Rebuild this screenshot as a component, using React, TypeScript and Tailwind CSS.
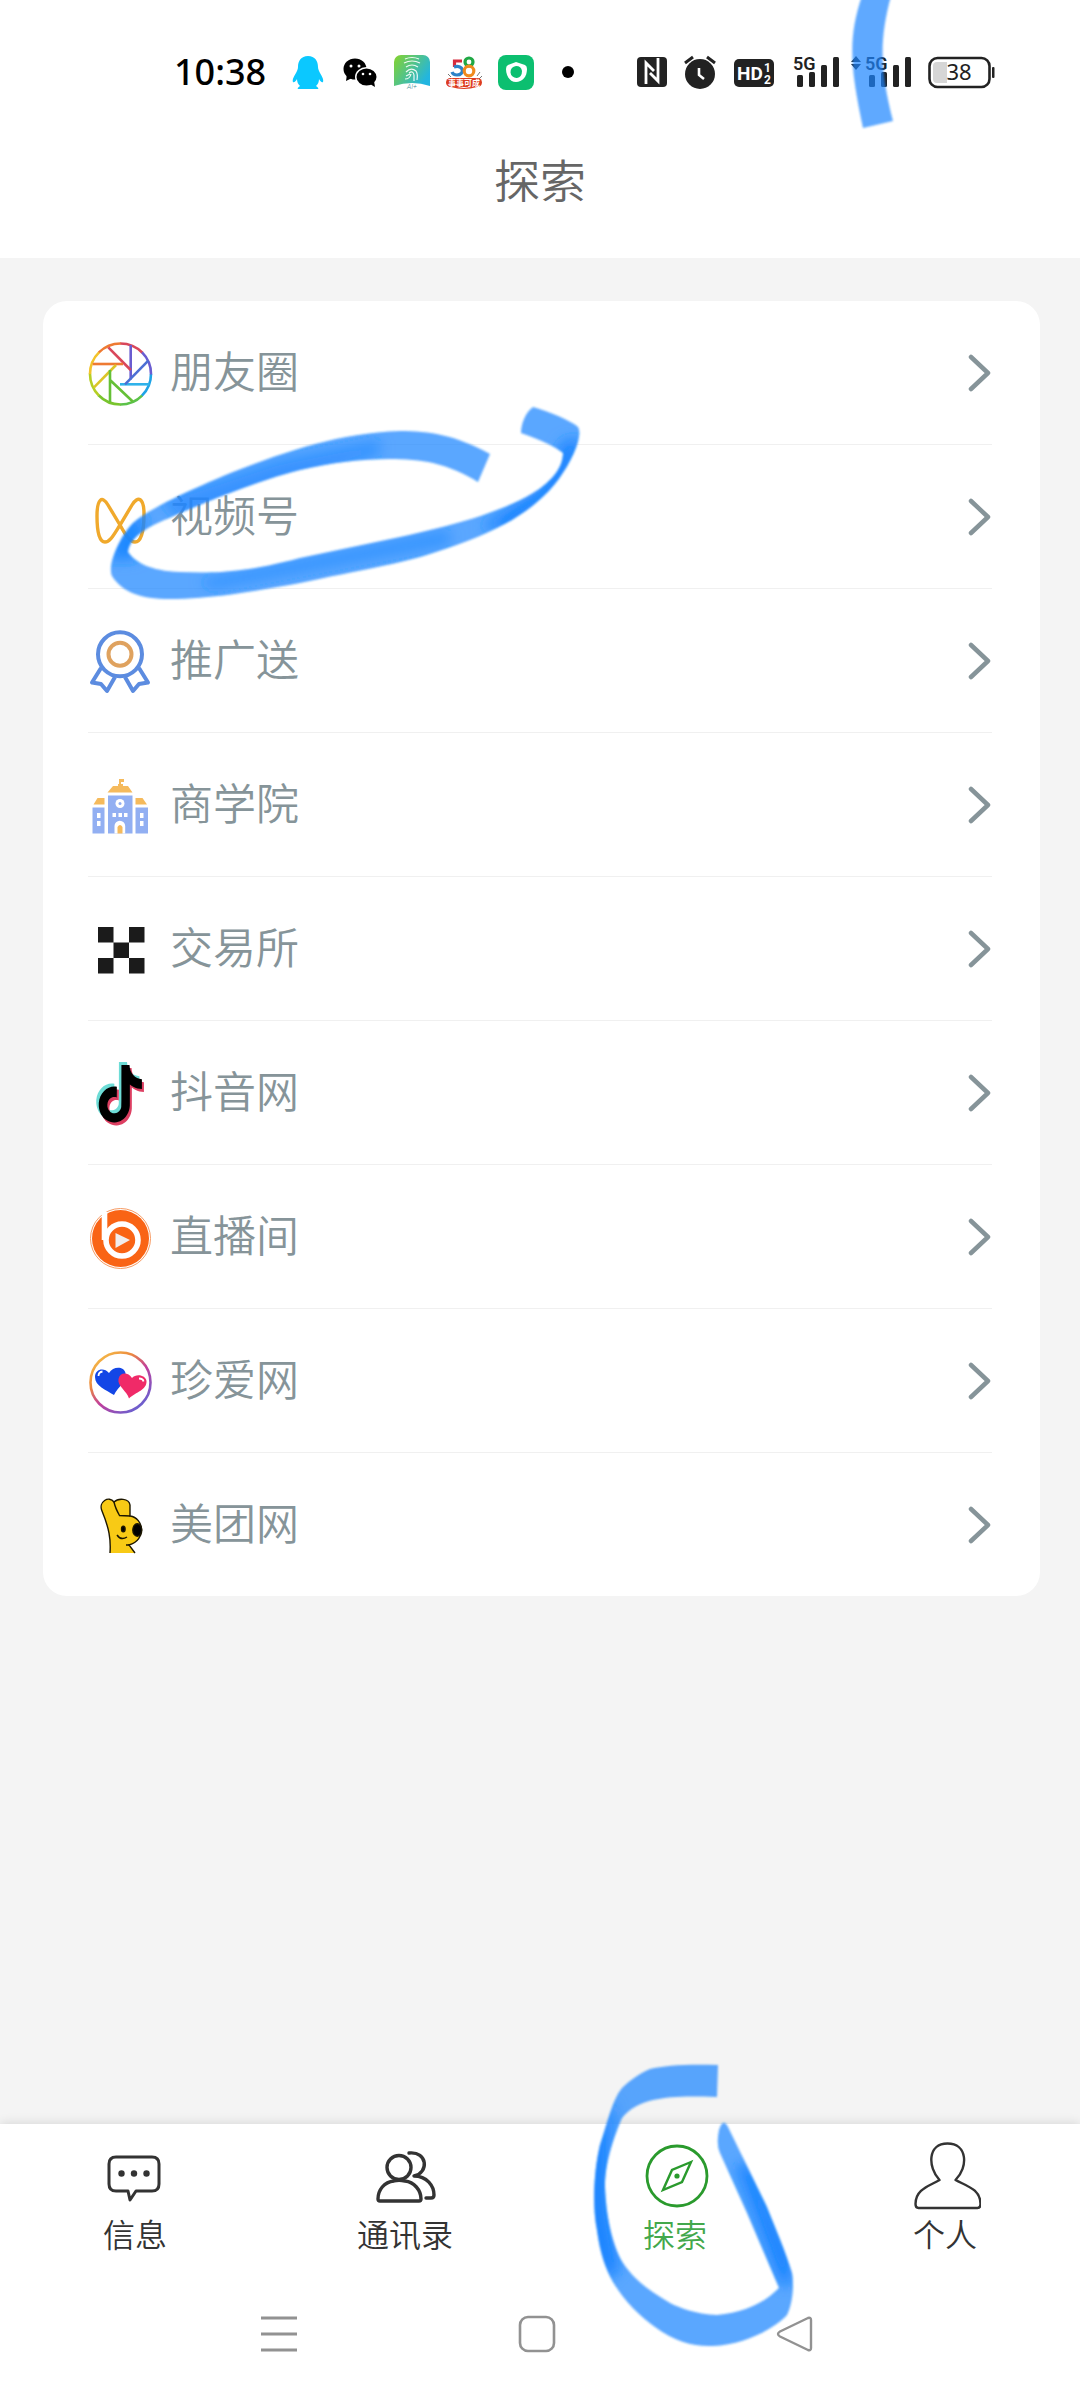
import { useState, type ReactNode } from 'react';

const BarIcon = ({ children, className = 'w-9' }: { children: ReactNode; className?: string }) => (
  <span className={`block h-9 shrink-0 ${className}`}>{children}</span>
);

const SignalBars = ({ x }: { x: number }) => (
  <g fill="#222">
    <text x={x + 1} y="16" fontSize="18" fontWeight="600" fontFamily="Roboto, sans-serif">
      5G
    </text>
    <rect x={x + 5} y="21" width="6" height="12" rx="1.5" />
    <rect x={x + 17} y="18" width="6" height="15" rx="1.5" />
    <rect x={x + 29} y="11" width="6" height="22" rx="1.5" />
    <rect x={x + 41} y="3" width="6" height="30" rx="1.5" />
  </g>
);

const StatusBar = () => (
  <div className="flex h-36 items-center justify-between pl-[174px] pr-[84px]">
    <div className="flex items-center gap-4">
      <time className="mr-2 font-['Noto_Sans',sans-serif] text-[36px] leading-9 font-medium text-black">10:38</time>
      <BarIcon>
        {/* QQ */}
        <svg viewBox="0 0 36 36" fill="#0bc8ff">
          <path d="M18 2C11 2 8 7 8 13c0 2-1 4-2 6-2 3-4 7-3 9 1 1 3-1 4-3 0 3 1 5 3 7-2 1-3 3-2 3h20c1 0 0-2-2-3 2-2 3-4 3-7 1 2 3 4 4 3 1-2-1-6-3-9-1-2-2-4-2-6 0-6-3-11-10-11z" />
        </svg>
      </BarIcon>
      <BarIcon>
        {/* WeChat */}
        <svg viewBox="0 0 36 36">
          <path d="M5 20l-1 7 6-3z" />
          <ellipse cx="13" cy="15" rx="11.5" ry="10.5" />
          <ellipse cx="24.5" cy="23" rx="11.5" ry="10" fill="#fff" />
          <ellipse cx="24.5" cy="23" rx="10" ry="8.6" />
          <path d="M28 30l5 3-1-6z" />
          <g fill="#fff">
            <circle cx="9" cy="12" r="1.5" />
            <circle cx="17" cy="12" r="1.5" />
            <circle cx="21" cy="20" r="1.3" />
            <circle cx="28" cy="20" r="1.3" />
          </g>
        </svg>
      </BarIcon>
      <BarIcon>
        <svg viewBox="0 0 36 36" fill="none">
          <defs>
            <linearGradient id="finger" x1="0" y1="0" x2="1" y2="0.6">
              <stop offset="0" stopColor="#86d32c" />
              <stop offset="1" stopColor="#22b5e0" />
            </linearGradient>
          </defs>
          <path d="M0 32V8a7 7 0 0 1 7-7h22a7 7 0 0 1 7 7v24Q18 26 0 32z" fill="url(#finger)" />
          <g stroke="#fff" strokeWidth="1.2" opacity=".9">
            <path d="M11 5q7-3 14 0M10 9q8-4 16 0M12 13q6-4 12 0M12 18q5-5 10-1 2 3 1 9M15 19q4-3 5 2v6M12 22l4-2M11 25q5 0 6-5" />
          </g>
          <text x="18" y="35" fontSize="7" textAnchor="middle" fill="#3f8c96" fontStyle="italic" fontFamily="Roboto, sans-serif">
            AI+
          </text>
        </svg>
      </BarIcon>
      <BarIcon>
        <svg viewBox="0 0 36 36">
          <path d="M2 20l3 3M34 18l-3 4M36 22l-3 3" stroke="#777" />
          <g fill="none" strokeWidth="3.2">
            <path d="M16 7H8.5v6" stroke="#d62b3c" />
            <path d="M8 13c10-3 11 8 3 8q-4 0-5-3" stroke="#2c83c8" />
            <circle cx="23" cy="8" r="4" stroke="#20a845" />
            <circle cx="23" cy="17" r="4.8" stroke="#f08a1d" />
          </g>
          <rect x="0" y="24" width="36" height="9" rx="4.5" fill="#dd3c20" />
          <path d="M5 31q13 6 26 0v2q-13 4-26 0z" fill="#dd3c20" />
          <text x="18" y="32" fontSize="8" fontWeight="700" textAnchor="middle" fill="#fff" fontFamily="Noto Sans CJK SC, sans-serif">
            事事可成
          </text>
        </svg>
      </BarIcon>
      <BarIcon>
        <svg viewBox="0 0 36 36">
          <rect y="1" width="36" height="35" rx="8" fill="#0cbf70" />
          <path d="M18 8l9 3q2 1 2 4c0 8-5 13-11 13S8 22 8 15q0-3 2-4z" fill="#fff" />
          <path d="M18 12a6 6 0 1 0 1 12q5-1 5-7a6 6 0 0 0-6-5z" fill="#0cbf70" />
        </svg>
      </BarIcon>
      <BarIcon>
        <svg viewBox="0 0 36 36">
          <circle cx="18" cy="18" r="6" />
        </svg>
      </BarIcon>
    </div>

    <div className="flex items-center gap-4">
      <BarIcon className="w-8">
        <svg viewBox="0 0 32 36" className="h-9 w-8">
          <rect x="1" y="3" width="30" height="30" rx="4" fill="#222" />
          <path d="M10 30V9l8 8M22 4v23l-8-8" fill="none" stroke="#fff" strokeWidth="2.8" />
        </svg>
      </BarIcon>
      <BarIcon className="w-8">
        <svg viewBox="0 0 32 36" className="h-9 w-8" fill="none">
          <circle cx="16" cy="20" r="15" fill="#222" />
          <path d="M1 9l8-6M31 9l-8-6" stroke="#222" strokeWidth="3" />
          <path d="M15 14v7l5 4" stroke="#fff" strokeWidth="2.6" />
        </svg>
      </BarIcon>
      <BarIcon className="w-11">
        <svg viewBox="0 0 44 36" className="h-9 w-11" fontWeight="700" fontFamily="Roboto, sans-serif" fill="#fff">
          <rect x="2" y="5" width="40" height="28" rx="5" fill="#222" />
          <text x="5" y="26" fontSize="19">HD</text>
          <text x="32" y="18" fontSize="12">1</text>
          <text x="32" y="30" fontSize="12">2</text>
        </svg>
      </BarIcon>
      <BarIcon className="w-12">
        <svg viewBox="0 0 48 36" className="h-9 w-12 overflow-visible">
          <SignalBars x={0} />
        </svg>
      </BarIcon>
      <BarIcon className="w-14">
        <svg viewBox="0 0 56 36" className="h-9 w-14 overflow-visible">
          <path d="M-5 8l5-6 5 6zM-5 10l5 6 5-6z" fill="#222" />
          <SignalBars x={8} />
        </svg>
      </BarIcon>
      <BarIcon className="w-[68px]">
        <svg viewBox="0 0 68 36" className="h-9 w-[68px]">
          <rect x="1.5" y="4" width="60" height="29" rx="8" fill="#fff" stroke="#222" strokeWidth="2.6" />
          <path d="M19 8H9q-4 0-4 4v13q0 4 4 4h10z" fill="#d6d6d6" />
          <text x="31" y="26" fontSize="22" textAnchor="middle" fill="#222" fontWeight="400" fontFamily="Noto Sans, sans-serif">
            38
          </text>
          <rect x="64" y="13" width="2.5" height="11" rx="1" fill="#222" />
        </svg>
      </BarIcon>
    </div>
  </div>
);

const RING = ['#1ea3e6', '#5cc24a', '#79c42d', '#b5cf25', '#f3c32b', '#ee7a32', '#d9475b', '#6a5cd0'];

const MomentsIcon = () => (
  <svg viewBox="0 0 64 64" className="overflow-visible" fill="none" strokeWidth="2.6">
    {RING.map((color, i) => (
      <circle key={color} cx="32.5" cy="33" r="30.5" stroke={color} pathLength={8} strokeDasharray="1.02 6.98" strokeDashoffset={-i} />
    ))}
    <path d="M42.7 4v34.5" stroke="#6a5cd0" />
    <path d="M20.3 6.3L42.7 29" stroke="#d9475b" />
    <path d="M4.7 23H35" stroke="#ee7a32" />
    <path d="M6 46.3L28 24" stroke="#dcc528" />
    <path d="M22 29v32M22 39l22.7 21.5" stroke="#65c036" />
    <path d="M32 43.3h29.5" stroke="#2fb2ea" />
    <path d="M60.3 19.7L37 43.3" stroke="#4c6fd4" />
  </svg>
);

const ChannelsIcon = () => (
  <svg viewBox="0 0 64 64" fill="none" stroke="#f0a92c" strokeWidth="3.4">
    <path d="M32 40L20 20C14 10 9 14 9 31c0 18 3 26 8 26 5 0 8-6 15-17l12-20c6-10 12-7 12 9 0 17-3 28-9 28-5 0-9-6-15-17z" />
  </svg>
);

const MedalIcon = () => (
  <svg viewBox="0 0 64 64" className="overflow-visible" fill="none" stroke="#5c8ce0" strokeWidth="4" strokeLinejoin="round">
    <circle cx="32" cy="25.3" r="22" />
    <circle cx="32" cy="25.3" r="11.5" stroke="#dfa25f" />
    <path d="M13 39L4 53.5l9 1.5 6 7 8-14M51 39l9 14.5-9 1.5-6 7-8-14" />
  </svg>
);

const SchoolIcon = () => (
  <svg viewBox="0 0 64 64">
    <path d="M31 6h5v3h-3v2h2v2h5l4.5 6.5h-25L25 13h5v-2h1zM9.5 25h7v6.5h-11zM47.5 25h7l4.5 6.5H47.5z" fill="#f5ba5c" />
    <path d="M20 22.5h24.5v38H20zM4.5 34.5h12v26h-12zM47.5 34.5H60v26H47.5z" fill="#92aff2" />
    <g fill="#fff">
      <circle cx="32" cy="30.5" r="4.5" />
      <path d="M24.5 40H28v4h-3.5zM30.5 40H34v4h-3.5zM36 40h3.5v4H36zM9 40h3.5v5H9zM9 48h3.5v5H9zM52 40h3.5v5H52zM52 48h3.5v5H52zM26.5 60.5V53a5.3 5.3 0 0 1 10.7 0v7.5z" />
    </g>
    <circle cx="32" cy="30.5" r="1.5" fill="#92aff2" />
    <path d="M29.5 60.5V54q2.5-4 5 0v6.5z" fill="#f5ba5c" />
  </svg>
);

const ExchangeIcon = () => (
  <svg viewBox="0 0 64 64" fill="#1b1b1b">
    <path d="M10 10h15.5v15.5H10zM41 10h15.5v15.5H41zM25.5 25.5H41V41H25.5zM10 41h15.5v15.5H10zM41 41h15.5v15.5H41z" />
  </svg>
);

const NOTE =
  'M12.525.02c1.31-.02 2.61-.01 3.91-.02.08 1.53.63 3.09 1.75 4.17 1.12 1.11 2.7 1.62 4.24 1.79v4.03c-1.44-.05-2.89-.35-4.2-.97-.57-.26-1.1-.59-1.62-.93-.01 2.92.01 5.84-.02 8.75-.08 1.4-.54 2.79-1.35 3.94-1.31 1.92-3.58 3.17-5.91 3.21-1.43.08-2.86-.31-4.08-1.03-2.02-1.19-3.44-3.37-3.65-5.71-.02-.5-.03-1-.01-1.49.18-1.9 1.12-3.72 2.58-4.96 1.66-1.44 3.98-2.13 6.15-1.72.02 1.48-.04 2.96-.04 4.44-.99-.32-2.15-.23-3.02.37-.63.41-1.11 1.04-1.36 1.75-.21.51-.15 1.07-.14 1.61.24 1.64 1.82 3.02 3.5 2.87 1.12-.01 2.19-.66 2.77-1.61.19-.33.4-.67.41-1.06.1-1.79.06-3.57.07-5.36.01-4.03-.01-8.05.02-12.07z';

const DouyinIcon = () => (
  <svg viewBox="0 0 64 64" className="overflow-visible">
    <path d={NOTE} fill="#6ddcd6" transform="translate(5 1) scale(2.07 2.4)" />
    <path d={NOTE} fill="#dd3f62" transform="translate(9.5 7) scale(2.07 2.4)" />
    <path d={NOTE} fill="#000" transform="translate(7.5 4) scale(2.07 2.4)" />
  </svg>
);

const LiveIcon = () => (
  <svg viewBox="0 0 64 64" className="overflow-visible" fill="none">
    <circle cx="32.5" cy="33.5" r="30" stroke="#f79a62" />
    <circle cx="32.5" cy="33.5" r="28.5" fill="#f96415" />
    <path d="M16.5 7v28" stroke="#fff" strokeWidth="5.6" />
    <circle cx="34" cy="35" r="16" stroke="#fff" strokeWidth="5.6" />
    <path d="M27.5 28v15L42 35z" fill="#f0eeee" />
  </svg>
);

const HeartsIcon = () => (
  <svg viewBox="0 0 64 64" className="overflow-visible" fill="none">
    <defs>
      <linearGradient id="hearts" x1="0.1" y1="0" x2="0.9" y2="1">
        <stop offset="0" stopColor="#f7c548" />
        <stop offset="0.3" stopColor="#ec8a3f" />
        <stop offset="0.55" stopColor="#c13f9c" />
        <stop offset="1" stopColor="#5568dc" />
      </linearGradient>
    </defs>
    <circle cx="32.5" cy="33.5" r="30" stroke="url(#hearts)" strokeWidth="2.6" />
    <path d="M26 46C18 41 7 37 7 28c0-8 9-10 14-4 4-7 15-7 16.5 0C39 32 30 38 26 46z" fill="#1346e6" />
    <path d="M41 49.5C39 42 29 37 30.5 30c1.5-7 9.5-7 13.5-1 4-5 14-3 14.5 3 .5 9-10.5 11-17.5 17.5z" fill="#f02a68" />
    <path d="M10.5 27q0-4 4-4.5M51 29.5q4 0 4.5 3" stroke="#fff" strokeWidth="1.8" />
  </svg>
);

const MeituanIcon = () => (
  <svg viewBox="0 0 64 64" stroke="#1c1600" strokeWidth="1.4">
    <path d="M22 60c1-14-1-25-8-42-4-9 7-16 12-9 4-4 15-4 16 3l0 11c14 2 17 24-1 29l6 8" fill="#f8ca15" />
    <path d="M26 9c1 5 3 9 5.5 13.5L42 23M38 52h4" fill="none" />
    <ellipse cx="49.3" cy="37" rx="4.5" ry="6.2" fill="#000" />
    <ellipse cx="35.3" cy="36" rx="1.8" ry="2.8" fill="#000" />
    <path d="M29 42q4 6 10 2" fill="none" />
  </svg>
);

const PEN = '#1a85ff';

// Marker stroke around the second entry
const ChannelsMark = () => (
  <svg viewBox="100 397 490 212" className="pointer-events-none absolute -top-12 left-3 z-10 h-[212px] w-[490px] max-w-none" aria-hidden="true">
    <defs>
      <filter id="soft" x="-10%" y="-10%" width="120%" height="120%">
        <feGaussianBlur stdDeviation="1.3" />
      </filter>
      <filter id="softer" x="-50%" y="-50%" width="200%" height="200%">
        <feGaussianBlur stdDeviation="7" />
      </filter>
      <clipPath id="ringClip">
        <path d="M490 454C455 435 430 431 400 431C340 433 290 450 233 472C190 490 150 508 133 523C120 536 107 565 112 576C122 592 140 599 170 599C210 599 250 592 300 583C360 570 400 564 433 553C500 532 535 510 558 480C574 458 583 435 578 427C570 420 550 412 533 407C525 413 521 424 521 433C540 440 555 446 563 453C563 470 548 484 533 493C500 513 450 526 400 537L300 558C240 574 210 573 180 572C150 571 135 562 128 552C130 536 150 526 167 519C210 500 260 480 300 470C350 458 400 456 433 463C450 467 465 474 478 482Z" />
      </clipPath>
    </defs>
    <g filter="url(#soft)">
      <g clipPath="url(#ringClip)">
        <rect x="100" y="397" width="490" height="212" fill={PEN} opacity=".72" />
        <g filter="url(#softer)" fill={PEN}>
          <path d="M105 560l20-40 22-6-10 45z" opacity=".9" />
          <path d="M480 528l60-40 24-48h20l-20 50-50 40z" />
          <path d="M160 500l120-40 100-20v14L180 520zM200 580l250-50v14l-240 45z" opacity=".6" />
        </g>
      </g>
    </g>
  </svg>
);

// Marker stroke around the active tab
const TabMark = () => (
  <svg viewBox="584 2055 220 300" className="pointer-events-none absolute top-[-69px] left-11 z-10 h-[300px] w-[220px] max-w-none" aria-hidden="true">
    <defs>
      <clipPath id="tabClip">
        <path d="M718 2065C690 2064 665 2065 650 2069C638 2074 628 2082 622 2088C612 2100 607 2125 600 2145C594 2170 592 2205 597 2230C600 2253 606 2270 613 2282C625 2302 640 2316 655 2327C675 2342 695 2347 713 2346C745 2345 775 2328 787 2315C793 2303 794 2285 792 2273C785 2250 776 2230 767 2207L728 2127Q723 2117 719 2130Q716 2145 720 2153L747 2213L779 2288C765 2302 745 2313 717 2315C695 2314 680 2308 670 2303C650 2291 635 2281 623 2263C612 2245 606 2215 605 2187C605 2160 615 2135 622 2118C630 2108 640 2103 653 2100C670 2096 690 2096 717 2097Z" />
      </clipPath>
    </defs>
    <g filter="url(#soft)">
      <g clipPath="url(#tabClip)">
        <rect x="584" y="2055" width="220" height="300" fill={PEN} opacity=".72" />
        <g filter="url(#softer)" fill={PEN}>
          <path d="M616 2100l-30 50v90l20 40 14-10-10-60v-60z" />
          <path d="M735 2165l45 120h12v-30l-40-90z" />
        </g>
      </g>
    </g>
  </svg>
);

const items = [
  { label: '朋友圈', Icon: MomentsIcon },
  { label: '视频号', Icon: ChannelsIcon, marked: true },
  { label: '推广送', Icon: MedalIcon },
  { label: '商学院', Icon: SchoolIcon },
  { label: '交易所', Icon: ExchangeIcon },
  { label: '抖音网', Icon: DouyinIcon },
  { label: '直播间', Icon: LiveIcon },
  { label: '珍爱网', Icon: HeartsIcon },
  { label: '美团网', Icon: MeituanIcon },
];

const MessageIcon = () => (
  <svg viewBox="0 0 72 72" fill="none" stroke="#333" strokeWidth="3" strokeLinejoin="round">
    <path d="M17 18h36q7 0 7 7v20q0 7-7 7H37l-6 9-2-9H17q-7 0-7-7V25q0-7 7-7z" />
    <g fill="#333" stroke="none">
      <circle cx="22.5" cy="34.5" r="3.2" />
      <circle cx="35" cy="34.5" r="3.2" />
      <circle cx="47.5" cy="34.5" r="3.2" />
    </g>
  </svg>
);

const ContactsIcon = () => (
  <svg viewBox="0 0 72 72" fill="none" stroke="#333" strokeWidth="3.4" strokeLinecap="round" strokeLinejoin="round">
    <circle cx="30" cy="28.5" r="12" />
    <path d="M25 42C15 43 9 51 9 60q0 2 2 2h39q2 0 2-2c0-9-7-17-16-18-4-1-8-1-11 0z" />
    <path d="M40 14c19-2 20 20 5 23 13 0 20 10 20 19q0 3-3 3h-5" />
  </svg>
);

const CompassIcon = () => (
  <svg viewBox="0 0 72 72" fill="none" stroke="#2a9a2d" strokeWidth="2.8">
    <circle cx="38" cy="37" r="30" />
    <path d="M52 23l-19 8-9 20 19-8z" strokeWidth="2.4" />
    <circle cx="38" cy="37" r="2.6" fill="#2a9a2d" stroke="none" />
  </svg>
);

const PersonIcon = () => (
  <svg viewBox="0 0 72 72" fill="none" stroke="#333" strokeWidth="2.4" strokeLinejoin="round">
    <path d="M38.5 4.5c-20 0-20 23.500-8 36.500-10 6-24 9-24 24q0 4 3 4h59q3 0 3-4c0-15-14-18-25-24 13-13 12-36.500-8-36.500z" />
  </svg>
);

const tabs = [
  { label: '信息', Icon: MessageIcon },
  { label: '通讯录', Icon: ContactsIcon },
  { label: '探索', Icon: CompassIcon },
  { label: '个人', Icon: PersonIcon },
];

const App = () => {
  const [active, setActive] = useState('探索');

  return (
    <div className="flex min-h-screen flex-col bg-[#f4f4f4] font-['Noto_Sans_CJK_SC',sans-serif] font-[350]">
      <header className="relative bg-white">
        <StatusBar />
        <h1 className="h-[114px] pt-1 text-center text-[46px] leading-[60px] text-[#666]">探索</h1>
        <svg viewBox="840 0 60 140" className="pointer-events-none absolute top-0 right-[180px] h-[140px] w-[60px]" aria-hidden="true">
          <path d="M862-4C847 40 851 70 863 128L893 121C880 70 879 40 891-4Z" fill={PEN} opacity=".7" filter="url(#soft)" />
        </svg>
      </header>

      <main className="flex-1 px-10 pt-[43px] pb-10">
        <ul className="ml-[3px] rounded-3xl bg-white pr-12 pl-[45px]">
          {items.map(({ label, Icon, marked }) => (
            <li key={label} className="relative border-b border-[#f0f0f0] last:border-b-0">
              <a href="#" className="flex h-[143px] items-center">
                <span className="h-16 w-16 shrink-0">
                  <Icon />
                </span>
                <span className="ml-[18px] flex-1 pb-2 text-[43px] leading-[60px] text-[#869499]">{label}</span>
                <svg viewBox="0 0 24 40" className="h-10 w-6" fill="none" stroke="#869499" strokeWidth="4.5" strokeLinecap="round" strokeLinejoin="round">
                  <path d="M3 4l17 16L3 36" />
                </svg>
              </a>
              {marked && <ChannelsMark />}
            </li>
          ))}
        </ul>
      </main>

      <footer className="bg-white shadow-[0_-1px_10px_rgba(0,0,0,0.12)]">
        <nav className="grid h-36 grid-cols-4">
          {tabs.map(({ label, Icon }) => (
            <div key={label} className="relative flex justify-center pt-[15px]">
              <button
                type="button"
                onClick={() => setActive(label)}
                className={`flex flex-col items-center ${active === label ? 'text-[#43a84c]' : 'text-[#333]'}`}
              >
                <span className="h-[72px] w-[72px]">
                  <Icon />
                </span>
                <span className="text-[32px] leading-[44px]">{label}</span>
              </button>
              {label === '探索' && <TabMark />}
            </div>
          ))}
        </nav>

        {/* System navigation */}
        <div className="grid h-[132px] grid-cols-3 place-items-center pr-[156px] pl-[150px]">
          <button type="button" aria-label="菜单">
            <svg viewBox="0 0 40 40" className="h-10 w-10" stroke="#929292" strokeWidth="3">
              <path d="M2 4h36M2 20h36M2 36h36" />
            </svg>
          </button>
          <button type="button" aria-label="主页">
            <svg viewBox="0 0 40 40" className="h-10 w-10" fill="none" stroke="#929292" strokeWidth="2.6">
              <rect x="3" y="3" width="34" height="34" rx="8" />
            </svg>
          </button>
          <button type="button" aria-label="返回">
            <svg viewBox="0 0 40 40" className="h-10 w-10" fill="none" stroke="#929292" strokeWidth="2.4" strokeLinejoin="round">
              <path d="M5 17.5L33 4q3-1 3 2v28q0 3-3 2L5 22.5q-4-2.5 0-5z" />
            </svg>
          </button>
        </div>
      </footer>
    </div>
  );
};

export default App;
